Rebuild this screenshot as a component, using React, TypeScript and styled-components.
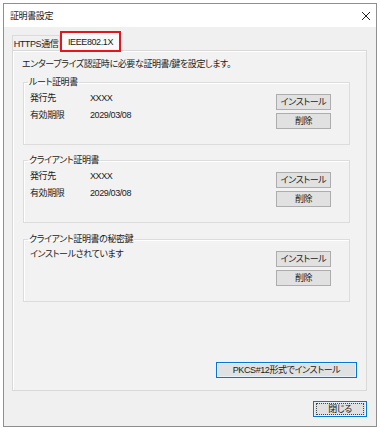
import React from "react";
import styled, { createGlobalStyle } from "styled-components";

const GlobalStyle = createGlobalStyle`
  html, body {
    margin: 0;
    padding: 0;
    background: #ffffff;
  }
  body {
    font-family: "Liberation Sans", "Noto Sans CJK JP", sans-serif;
    font-size: 9px;
    line-height: 12px;
    letter-spacing: -0.4px;
    color: #1a1a1a;
    font-feature-settings: "palt";
  }
`;

const Window = styled.div`
  box-sizing: border-box;
  width: 374px;
  height: 424px;
  margin: 3px 0 0 3px;
  border: 1px solid #8f8f8f;
  display: flex;
  flex-direction: column;
  background: #f0f0f0;
`;

const TitleBar = styled.div`
  height: 23px;
  flex: none;
  display: flex;
  align-items: center;
  justify-content: space-between;
  padding: 0 5px 0 6px;
  background: #ffffff;
`;

const Title = styled.span`
  font-size: 9px;
`;

const CloseIcon = styled.svg`
  width: 10px;
  height: 10px;
  display: block;
`;

const Body = styled.div`
  flex: 1;
  display: flex;
  flex-direction: column;
  padding: 4px 9px 9px 8px;
`;

const TabStrip = styled.div`
  display: flex;
  align-items: flex-end;
  height: 19px;
  position: relative;
  z-index: 1;
`;

const Tab = styled.div<{ $active?: boolean }>`
  box-sizing: border-box;
  display: flex;
  align-items: center;
  justify-content: center;
  white-space: nowrap;
  width: ${(p) => (p.$active ? "61px" : "48px")};
  height: ${(p) => (p.$active ? "21px" : "15px")};
  margin-bottom: ${(p) => (p.$active ? "-2px" : "0")};
  border: ${(p) => (p.$active ? "2px solid #e3161e" : "1px solid #dadada")};
  border-bottom: ${(p) => (p.$active ? "2px solid #e3161e" : "none")};
  background: ${(p) => (p.$active ? "#f9f9f9" : "#f0f0f0")};
  padding-top: 1px;
`;

const Panel = styled.div`
  box-sizing: border-box;
  height: 341px;
  display: flex;
  flex-direction: column;
  padding: 7px 9px 12px 9px;
  border: 1px solid #d9d9d9;
  box-shadow: inset 1px 1px 0 #ffffff;
  background: #f2f2f2;
`;

const Description = styled.div`
  margin-bottom: 6px;
`;

const Group = styled.fieldset<{ $gap: number }>`
  margin: ${(p) => p.$gap}px 7px 0 1px;
  padding: 0;
  min-width: 0;
  border: 1px solid #dcdcdc;
  box-shadow: inset 1px 1px 0 #ffffff;
`;

const Legend = styled.legend`
  margin-left: 4px;
  padding: 0 1px;
  line-height: 12px;
`;

const GroupContent = styled.div`
  display: flex;
  justify-content: space-between;
  align-items: flex-start;
  padding: 1px 18px 15px 6px;
`;

const InfoGrid = styled.div`
  display: grid;
  grid-template-columns: 60px auto;
  grid-auto-rows: 17px;
  align-items: center;
`;

const StatusText = styled.div`
  line-height: 17px;
`;

const ButtonColumn = styled.div`
  display: flex;
  flex-direction: column;
  gap: 3px;
  margin-top: 5px;
`;

const Button = styled.button<{ $width?: number; $primary?: boolean }>`
  box-sizing: border-box;
  position: relative;
  width: ${(p) => p.$width ?? 55}px;
  height: 16px;
  padding: 0;
  font: inherit;
  line-height: 12px;
  letter-spacing: inherit;
  color: #1a1a1a;
  background: #e1e1e1;
  border: 1px solid ${(p) => (p.$primary ? "#0078d7" : "#adadad")};
  box-shadow: ${(p) => (p.$primary ? "inset 0 0 0 1px #e5f1fb" : "none")};
`;

const FocusRing = styled.span`
  position: absolute;
  inset: 1px 2px;
  border: 1px dotted #444444;
  pointer-events: none;
`;

const PanelFooter = styled.div`
  margin-top: auto;
  display: flex;
  justify-content: flex-end;
`;

const DialogFooter = styled.div`
  margin-top: auto;
  display: flex;
  justify-content: flex-end;
`;

interface ICertInfo {
  title: string;
  issuer: string;
  expires: string;
  gap: number;
}

const certificates: ICertInfo[] = [
  { title: "ルート証明書", issuer: "XXXX", expires: "2029/03/08", gap: 0 },
  { title: "クライアント証明書", issuer: "XXXX", expires: "2029/03/08", gap: 9 },
];

const ActionButtons = () => (
  <ButtonColumn>
    <Button>インストール</Button>
    <Button>削除</Button>
  </ButtonColumn>
);

export default function App(): JSX.Element {
  return (
    <>
      <GlobalStyle />
      <Window>
        <TitleBar>
          <Title>証明書設定</Title>
          <CloseIcon viewBox="0 0 10 10">
            <path d="M1 1 L9 9 M9 1 L1 9" stroke="#222" strokeWidth="1" fill="none" />
          </CloseIcon>
        </TitleBar>
        <Body>
          <TabStrip>
            <Tab>HTTPS通信</Tab>
            <Tab $active>IEEE802.1X</Tab>
          </TabStrip>
          <Panel>
            <Description>エンタープライズ認証時に必要な証明書/鍵を設定します。</Description>

            {certificates.map((cert) => (
              <Group key={cert.title} $gap={cert.gap}>
                <Legend>{cert.title}</Legend>
                <GroupContent>
                  <InfoGrid>
                    <span>発行先</span>
                    <span>{cert.issuer}</span>
                    <span>有効期限</span>
                    <span>{cert.expires}</span>
                  </InfoGrid>
                  <ActionButtons />
                </GroupContent>
              </Group>
            ))}

            <Group $gap={10}>
              <Legend>クライアント証明書の秘密鍵</Legend>
              <GroupContent>
                <StatusText>インストールされています</StatusText>
                <ActionButtons />
              </GroupContent>
            </Group>

            <PanelFooter>
              <Button $width={141} $primary>
                PKCS#12形式でインストール
              </Button>
            </PanelFooter>
          </Panel>
          <DialogFooter>
            <Button $width={54} $primary>
              <FocusRing />
              閉じる
            </Button>
          </DialogFooter>
        </Body>
      </Window>
    </>
  );
}
